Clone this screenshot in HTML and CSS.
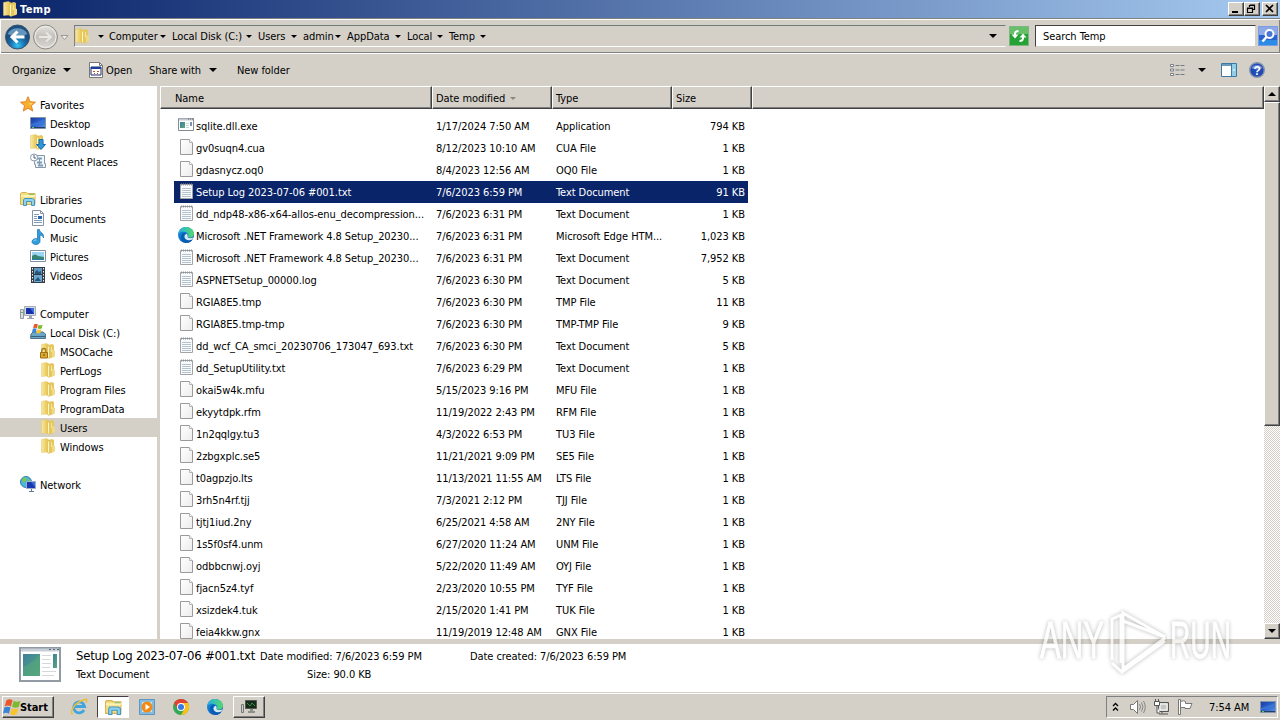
FILE: index.html
```
<!DOCTYPE html>
<html lang="en">
<head>
    <meta charset="UTF-8">
    <title>Temp</title>
    <link rel="stylesheet" href="styles.css">
</head>
<body>
    <!-- Shared icons -->
    <svg width="0" height="0" class="defs">
        <defs>
            <linearGradient id="gFolder"><stop offset="0" stop-color="#f9eaa0"/><stop offset="1" stop-color="#e2bb45"/></linearGradient>
            <linearGradient id="gBlue" x2="1" y2="1"><stop offset="0" stop-color="#173a9c"/><stop offset=".5" stop-color="#2c60cc"/><stop offset="1" stop-color="#5a9bea"/></linearGradient>
            <linearGradient id="gPage" x2="1" y2="1"><stop offset="0" stop-color="#fff"/><stop offset="1" stop-color="#ececec"/></linearGradient>
            <linearGradient id="gEdge" x2="1" y2="1"><stop offset="0" stop-color="#1b9de2"/><stop offset=".5" stop-color="#0c6fc8"/><stop offset="1" stop-color="#0b4f9e"/></linearGradient>
            <linearGradient id="gEdge2"><stop offset="0" stop-color="#25aee6"/><stop offset="1" stop-color="#55d96a"/></linearGradient>
            <linearGradient id="gTeal" x2="1" y2="1"><stop offset="0" stop-color="#3d7f9c"/><stop offset="1" stop-color="#57a97a"/></linearGradient>
            <radialGradient id="gBack" cy=".85"><stop offset="0" stop-color="#35c3f2"/><stop offset=".6" stop-color="#1871b0"/><stop offset="1" stop-color="#1c4f80"/></radialGradient>
            <linearGradient id="gFwd" x2="0" y2="1"><stop offset="0" stop-color="#e6e4e0"/><stop offset=".5" stop-color="#c2bfba"/><stop offset="1" stop-color="#dddad5"/></linearGradient>
        </defs>
        <symbol id="folder" viewBox="0 0 16 16">
            <path d="M7 2.500l5-1.500 2 1v12l-5 1.500z" fill="#e6c75f"/>
            <path d="M1.500 1.500l5-1 2.500 1.500v13.500l-2.500-1.500-5 .5z" fill="url(#gFolder)" stroke="#e3c565" stroke-width=".5"/>
            <path d="M8.500 3.500v11" stroke="#fff6c8"/><path d="M11.500 4v5" stroke="#f6e49c"/>
            <path d="M12 7l3 1v5.500l-3 .5z" fill="#f0da83"/>
        </symbol>
        <symbol id="file" viewBox="0 0 16 16">
            <path d="M2.500.5h9l3 3v12h-12z" fill="url(#gPage)" stroke="#9a9a9a"/>
            <path d="M11.500.5v3h3" fill="#fff" stroke="#b5b5b5"/>
        </symbol>
        <symbol id="text" viewBox="0 0 16 16">
            <path d="M2.500 1.500h12v14h-12z" fill="#f8fafb" stroke="#a0a4a8"/>
            <path d="M3 1.500h11.500" stroke="#8b9298" stroke-width="2" stroke-dasharray="1 1"/>
            <path d="M4 5.500h9M4 7.500h9M4 9.500h9M4 11.500h9M4 13.500h9" stroke="#b3c4cf"/>
        </symbol>
        <symbol id="app" viewBox="0 0 16 16">
            <path d="M.5 1.500h15v12h-15z" fill="#fff" stroke="#858b92"/>
            <path d="M1 2.500h14" stroke="#c3c9d0" stroke-width="2"/>
            <path d="M10 2h1M12 2h1M14 2h1" stroke="#59616b"/>
            <path d="M2 5h5v6h-5z" fill="url(#gTeal)"/>
            <path d="M8 6.500h3M8 8.500h3M8 10.500h3" stroke="#ccd3d8"/>
            <path d="M12 5h2v4h-2z" fill="#7892ad"/>
        </symbol>
        <symbol id="edge" viewBox="0 0 16 16">
            <circle cx="8" cy="8" r="8" fill="url(#gEdge)"/>
            <path d="M.3 6.500C1.500 2 4.500 0 8 0c4.500 0 8 3 8 6.800 0 2.400-1.800 3.900-4 3.900-1.700 0-2.600-.6-2.500-1.200.8-.8.9-1.600.5-2.500C9 4.500 3.500 3.500.3 6.500z" fill="url(#gEdge2)"/>
            <path d="M5.800 9.500c0-1.800 1-3 2.500-3.500-1.300-.7-4-.3-5 2.200-1 3 .7 6.600 4 7.500 3 .5 5.700-.8 7.200-3-3.700 2-8.700.8-8.700-3.200z" fill="#0a5cb2"/>
            <path d="M9.500 9.500c-.4.9 1.200 1.900 3.400 1.600 1.200-.1 1.900-.6 2.600-1.200-.3 1-.8 1.900-1.300 2.700-3.500 1.500-7.500.5-7.700-2.800 0-1.500.8-2.500 2.100-3 1 .5 1.300 1.600.9 2.700z" fill="#d8ebfa"/>
        </symbol>
        <symbol id="star" viewBox="0 0 16 16">
            <path d="M8 .7l2.100 5 5.400.5-4.100 3.500 1.300 5.300L8 12.200 3.300 15l1.300-5.300L.5 6.200l5.400-.5z" fill="#f9ae2d" stroke="#df8528"/>
            <path d="M8 3l1.200 3.800 3.500.4-2.700 2" fill="#ffdc75"/>
        </symbol>
        <symbol id="desktop" viewBox="0 0 16 16">
            <path d="M.5 2.500h15v11h-15z" fill="url(#gBlue)" stroke="#8294aa"/>
            <path d="M1 9l14-5v5L1 11z" fill="#3d77d8" opacity=".7"/>
            <path d="M1 12.500h14" stroke="#263d68"/><path d="M2 12.500h2" stroke="#63c65d"/>
        </symbol>
        <symbol id="downloads" viewBox="0 0 16 16">
            <use href="#folder" x="-1"/>
            <path d="M9 5.500h4v5h2.500L11 15.500l-4.500-5H9z" fill="#2e96da" stroke="#1769aa"/>
        </symbol>
        <symbol id="recent" viewBox="0 0 16 16">
            <path d="M5 2.500h9.500v8h1v4h-10v-3h-1z" fill="#f1f5f8" stroke="#8795a4"/>
            <path d="M7 5.500h5M7 9.500h5M8 12.500h5" stroke="#7e9cb8" stroke-width="2"/>
            <path d="M9.500 5v8" stroke="#7e9cb8"/>
            <circle cx="4" cy="4.500" r="3.500" fill="#fff" stroke="#8899a8"/><path d="M4 2v3h2" fill="none" stroke="#44617f"/>
        </symbol>
        <symbol id="library" viewBox="0 0 16 16">
            <path d="M.5 13.500v-11l1-1h5l1 1h7.500v11z" fill="#f4dc81" stroke="#d5b455"/>
            <path d="M1 5h14" stroke="#fff3b4" stroke-width="2"/><path d="M9 3.500h5" stroke="#7fc576"/>
            <path d="M3.500 14.500V9l1-1.500h8l2 1.500v5.500h-3v-4h-5v4z" fill="#8ed1ee" stroke="#4096c4"/>
        </symbol>
        <symbol id="document" viewBox="0 0 16 16">
            <path d="M2.500.5h8l3 3v12h-11z" fill="#fff" stroke="#8594a5"/><path d="M10.500.5v3h3" fill="none" stroke="#8594a5"/>
            <path d="M4 4.500h5M4 6.500h3M4 8.500h3M4 10.500h8M4 12.500h8" stroke="#7d9dbd"/>
            <path d="M8 6h4v3h-4z" fill="#2d67a5"/>
        </symbol>
        <symbol id="music" viewBox="0 0 16 16">
            <path d="M7.500.5h2c0 3 5 3.500 4 8.500-.5-2-2-3-3.500-3v6.500C9.500 17 1.500 16 2 12.500c.3-2.500 3.500-3.500 5.500-2.500z" fill="#2d9ddd" stroke="#2370a8" stroke-width=".7"/>
            <path d="M3.500 12q1-1.500 3-1" stroke="#a3def9" fill="none"/>
        </symbol>
        <symbol id="pictures" viewBox="0 0 16 16">
            <path d="M.5 2.500h15v11h-15z" fill="#fff" stroke="#8090a0"/>
            <path d="M2 4h12v8H2z" fill="#9bd5f4"/><path d="M2 8q3-3 6 0l6 1v3H2z" fill="#378472"/><path d="M2 11.500h12" stroke="#247cae"/>
        </symbol>
        <symbol id="videos" viewBox="0 0 16 16">
            <path d="M1 0h14v16H1z" fill="#343b44"/><path d="M4 1h8v6H4z" fill="#5d9bc2"/><path d="M4 8h8v7H4z" fill="#6ba9d0"/>
            <path d="M5 5l2-2 2 2 2-1v3H5zM5 13l3-3 3 4H5z" fill="#2a567b"/>
            <path d="M2.500 1v15M13.500 1v15" stroke="#eee" stroke-dasharray="1.500 1.500"/>
        </symbol>
        <symbol id="computer" viewBox="0 0 16 16">
            <path d="M.5 4.500h3v9h-3z" fill="#d9dce0" stroke="#929aa1"/><path d="M1 7.500h2" stroke="#5eb85b"/>
            <path d="M4.500 1.500h11v9h-11z" fill="#d4dce6" stroke="#a4acb5"/>
            <path d="M6 3h8v6H6z" fill="#182fac"/><path d="M10 3h4v6z" fill="#3c6dd9"/><path d="M9 11h3v2h2v1H7v-1h2z" fill="#9aa6b3"/>
        </symbol>
        <symbol id="disk" viewBox="0 0 16 16">
            <path d="M1 10l2-2h10l2.500 2v4.500H.5z" fill="#6aa6c8" stroke="#50738c"/><path d="M1 12.500h14" stroke="#3d617b"/>
            <use href="#flag" x="2" y="-1" width="11" height="11"/>
        </symbol>
        <symbol id="flag" viewBox="0 0 16 16">
            <path d="M3 2q3-2 5.500 0L7 7.500Q4.500 6 1.500 7.500z" fill="#e8572d"/>
            <path d="M9.500 2.500Q12 4 15.500 2.500L14 8q-3 1.500-6-.3z" fill="#7fb92c"/>
            <path d="M1.200 8.500q2.600-1.500 5.500 0L5.300 14Q3 12.500 0 13.800z" fill="#3a84d8"/>
            <path d="M7.700 9Q10.500 10.500 13.700 9l-1.500 5.500q-3 1.500-6-.3z" fill="#f8c32c"/>
        </symbol>
        <symbol id="lockfolder" viewBox="0 0 16 16">
            <use href="#folder"/>
            <path d="M1.800 9V7.500a2 2 0 0 1 4 0V9" fill="none" stroke="#a27b24" stroke-width="1.400"/><path d="M.5 9.500h7v5.500h-7z" fill="#dda82e" stroke="#9c7118"/><path d="M4 11v2" stroke="#624711"/>
        </symbol>
        <symbol id="network" viewBox="0 0 16 16">
            <circle cx="6" cy="6" r="5.500" fill="#48b7df" stroke="#387eac"/><path d="M2 3l3-2 2 2-2 3-2 1zM8 3l3 2-3 2z" fill="#7ac553"/>
            <path d="M6.500 5.500h9v7h-9z" fill="#1738b3" stroke="#9eb1c8"/><path d="M11 6h4v5z" fill="#3c6dd9"/><path d="M11.500 13v2M9 15.500h5" stroke="#627b96"/>
        </symbol>
    </svg>

    <div class="titlebar">
        <svg class="icon"><use href="#folder"/></svg>
        <span class="title">Temp</span>
        <div class="window-buttons">
            <button><svg width="12" height="10"><path d="M2 8h6" stroke="#000" stroke-width="2"/></svg></button>
            <button><svg width="12" height="10"><path d="M3.500 3V1.500h5v4H7M4 1h5M1.500 4.500h5v4h-5zM1 4h6" fill="none" stroke="#000" stroke-width="1.200"/></svg></button>
            <button class="close"><svg width="12" height="10"><path d="M2 1l7 7M9 1L2 8" stroke="#000" stroke-width="1.700"/></svg></button>
        </div>
    </div>

    <div class="navbar">
        <svg class="nav-buttons" width="69" height="30" viewBox="0 0 69 30">
            <circle cx="17.500" cy="16" r="12" fill="url(#gBack)" stroke="#38536e"/>
            <path d="M7.500 13a11 10 0 0 1 20 0q-10 5-20 0z" fill="#8dbbd9" opacity=".65"/>
            <path d="M24.500 16H12.500M17.500 10.500L12 16l5.500 5.500" fill="none" stroke="#fff" stroke-width="3"/>
            <circle cx="45.500" cy="16" r="12" fill="url(#gFwd)" stroke="#8d8b87"/>
            <circle cx="45.500" cy="16" r="10.500" fill="none" stroke="#efeeeb"/>
            <path d="M39 16h12M46 11.500l5 4.500-5 4.500" fill="none" stroke="#e8e6e3" stroke-width="2"/>
            <path d="M61 14.500h7l-3.500 4z" fill="#eee" stroke="#999"/>
        </svg>
        <div class="address">
            <svg class="icon"><use href="#folder"/></svg>
            <i class="arrow first"></i>
            <span class="crumb c1">Computer</span><i class="arrow"></i>
            <span class="crumb c2">Local Disk (C:)</span><i class="arrow"></i>
            <span class="crumb c3">Users</span><i class="arrow"></i>
            <span class="crumb c4">admin</span><i class="arrow"></i>
            <span class="crumb c5">AppData</span><i class="arrow"></i>
            <span class="crumb c6">Local</span><i class="arrow"></i>
            <span class="crumb c7">Temp</span><i class="arrow"></i>
            <i class="arrow big history"></i>
        </div>
        <svg class="refresh" width="20" height="20" viewBox="0 0 20 20">
            <path d="M.5.5h19v19H.5z" fill="#27a336" stroke="#7cb781"/><path d="M1 1h18v7H1z" fill="#67bf69"/>
            <path d="M9.500 5Q5.500 5 6 9" fill="none" stroke="#fff" stroke-width="2"/><path d="M2.500 8.500h7L6 12.500z" fill="#fff"/>
            <path d="M10.500 15q4 0 3.500-4" fill="none" stroke="#fff" stroke-width="2"/><path d="M10.500 11.500h7L14 7.500z" fill="#fff"/>
        </svg>
        <div class="search">Search Temp</div>
        <svg class="search-button" width="20" height="20" viewBox="0 0 20 20">
            <path d="M.5.5h19v19H.5z" fill="#2a62ce" stroke="#7c9de1"/><path d="M1 1h18v8H1z" fill="#8da8e5"/><path d="M1 14h18v5H1z" fill="#2c8be4"/>
            <circle cx="11.500" cy="8" r="4" fill="#4c76d3" stroke="#fff" stroke-width="2"/><path d="M8.500 11L4.500 15.500" stroke="#fff" stroke-width="2.500"/>
        </svg>
    </div>

    <div class="toolbar">
        <span class="organize">Organize</span><i class="arrow big"></i>
        <svg class="open-icon" width="16" height="16" viewBox="0 0 16 16">
            <path d="M1.500.5h10l3 3v12h-13z" fill="#fff" stroke="#777"/><path d="M11.500.5v3h3" fill="none" stroke="#777"/>
            <path d="M3 5h10v8H3z" fill="#fff" stroke="#1d2b70"/><path d="M3 6h10" stroke="#1d3b9a" stroke-width="2"/><path d="M5 9.500h2M9 9.500h2M6 11.500h1M9 11.500h1" stroke="#b53"/>
        </svg>
        <span class="open">Open</span>
        <span class="share">Share with</span><i class="arrow big"></i>
        <span class="new-folder">New folder</span>
        <svg class="view-icon" width="16" height="14" viewBox="0 0 16 14">
            <path d="M.5 1.500h3v2h-3zM.5 6h3v2h-3zM.5 10.500h3v2h-3z" fill="#fff" stroke="#777d85"/>
            <path d="M5.500 2.500h10M5.500 7h10M5.500 11.500h10" stroke="#727a83" stroke-dasharray="4 1"/>
        </svg>
        <i class="arrow big view-arrow"></i>
        <svg class="pane-icon" width="16" height="14" viewBox="0 0 16 14">
            <path d="M.5.5h15v13H.5z" fill="#fff" stroke="#3c79a5"/><path d="M1 2h9" stroke="#6b9bbb" stroke-width="2"/><path d="M10 1h5v12h-5z" fill="#91cfe9"/><path d="M10.500 1v12" stroke="#3c79a5"/><path d="M12 7h2" stroke="#fff"/>
        </svg>
        <svg class="help-icon" width="16" height="16" viewBox="0 0 16 16">
            <circle cx="8" cy="8" r="7.300" fill="#1f49b5" stroke="#8593ad" stroke-width="1.400"/><path d="M2.500 6a6 5 0 0 1 11 0q-5 3-11 0z" fill="#7190d7"/>
            <text x="4.600" y="12.500" class="help-mark">?</text>
        </svg>
    </div>

    <div class="main">
        <!-- Navigation tree -->
        <div class="tree">
            <div class="item"><svg class="icon"><use href="#star"/></svg>Favorites</div>
            <div class="item sub"><svg class="icon"><use href="#desktop"/></svg>Desktop</div>
            <div class="item sub"><svg class="icon"><use href="#downloads"/></svg>Downloads</div>
            <div class="item sub"><svg class="icon"><use href="#recent"/></svg>Recent Places</div>
            <div class="item group"><svg class="icon"><use href="#library"/></svg>Libraries</div>
            <div class="item sub"><svg class="icon"><use href="#document"/></svg>Documents</div>
            <div class="item sub"><svg class="icon"><use href="#music"/></svg>Music</div>
            <div class="item sub"><svg class="icon"><use href="#pictures"/></svg>Pictures</div>
            <div class="item sub"><svg class="icon"><use href="#videos"/></svg>Videos</div>
            <div class="item group"><svg class="icon"><use href="#computer"/></svg>Computer</div>
            <div class="item sub"><svg class="icon"><use href="#disk"/></svg>Local Disk (C:)</div>
            <div class="item sub2"><svg class="icon"><use href="#lockfolder"/></svg>MSOCache</div>
            <div class="item sub2"><svg class="icon"><use href="#folder"/></svg>PerfLogs</div>
            <div class="item sub2"><svg class="icon"><use href="#folder"/></svg>Program Files</div>
            <div class="item sub2"><svg class="icon"><use href="#folder"/></svg>ProgramData</div>
            <div class="item sub2 current"><svg class="icon"><use href="#folder"/></svg>Users</div>
            <div class="item sub2"><svg class="icon"><use href="#folder"/></svg>Windows</div>
            <div class="item group"><svg class="icon"><use href="#network"/></svg>Network</div>
        </div>

        <!-- File list -->
        <div class="list">
            <div class="header">
                <div class="col name">Name</div>
                <div class="col">Date modified<i class="arrow sort"></i></div>
                <div class="col">Type</div>
                <div class="col">Size</div>
                <div class="col"></div>
            </div>
            <div class="rows" id="rows"></div>
        </div>

        <div class="scrollbar">
            <div class="sb-button"><i class="arrow big up"></i></div>
            <div class="thumb"></div>
            <div class="track"></div>
            <div class="sb-button"><i class="arrow big"></i></div>
        </div>
    </div>

    <div class="details">
        <svg class="preview" width="42" height="36" viewBox="0 0 42 36">
            <path d="M1 1h40v33H1z" fill="#fff" stroke="#929ba5" stroke-width="2"/>
            <path d="M2 3h38" stroke="#c7cfd8" stroke-width="3"/><path d="M30 2.500h2M34 2.500h2M38 2.500h2" stroke="#5b6873"/>
            <path d="M4 7h17v22H4z" fill="url(#gTeal)"/><path d="M4 20Q14 16 21 7v22H4z" fill="#55a67c" opacity=".6"/>
            <path d="M23 8.500h9M23 12.500h8M23 16.500h9M23 20.500h8M23 24.500h14M23 28.500h12" stroke="#d5d8da"/>
            <path d="M34 7h4v14h-4z" fill="url(#gTeal)"/>
        </svg>
        <div class="info">
            <div class="line"><span class="filename">Setup Log 2023-07-06 #001.txt</span><span class="modified">Date modified: 7/6/2023 6:59 PM</span><span>Date created: 7/6/2023 6:59 PM</span></div>
            <div class="line second"><span class="kind">Text Document</span><span class="size">Size: 90.0 KB</span></div>
        </div>
    </div>

    <div class="taskbar">
        <div class="start"><svg width="18" height="18"><use href="#flag"/></svg>Start</div>
        <div class="task">
            <svg width="18" height="18" viewBox="0 0 18 18">
                <path d="M14 12a5.500 5.500 0 1 1 .6-3.500H5" fill="none" stroke="#3fa5df" stroke-width="2.800"/>
                <path d="M3 16Q0 16 3 10T15 1.500Q18 .5 16 5" fill="none" stroke="#edbd36" stroke-width="1.500"/>
            </svg>
        </div>
        <div class="task pressed"><svg width="17" height="17"><use href="#library"/></svg></div>
        <div class="task">
            <svg width="16" height="16" viewBox="0 0 16 16">
                <path d="M.5.500h15v15H.5z" fill="#84bce3" stroke="#5c97c2"/><path d="M3 3h10v10H3z" fill="#c8e4f4"/><circle cx="8" cy="8" r="5.500" fill="#f28a16"/><path d="M6.500 5l4.500 3-4.500 3z" fill="#fff"/>
            </svg>
        </div>
        <div class="task">
            <svg width="16" height="16" viewBox="0 0 16 16">
                <circle cx="8" cy="8" r="8" fill="#35a853"/><path d="M1.100 4A8 8 0 0 1 15 4H8L4.500 10z" fill="#e34133"/><path d="M15 4a8 8 0 0 1-7 12l3.500-6V6L8 4z" fill="#fbc116"/>
                <circle cx="8" cy="8" r="4" fill="#fff"/><circle cx="8" cy="8" r="3" fill="#3879e8"/>
            </svg>
        </div>
        <div class="task"><svg width="16" height="16"><use href="#edge"/></svg></div>
        <div class="task raised">
            <svg width="16" height="16" viewBox="0 0 16 16">
                <path d="M4.500 1.500h11v8h-11z" fill="#172a1c" stroke="#50584f"/><path d="M6 4l3 3 2-3 3 3" fill="none" stroke="#388d43"/>
                <path d="M.5 5.500h2v8h-2z" fill="#ccc" stroke="#777"/><path d="M9 10h3v2h2v2H7v-2h2z" fill="#8d918b"/>
            </svg>
        </div>
        <div class="tray">
            <svg width="7" height="10" viewBox="0 0 7 10"><path d="M1 4l2.500-2.500L6 4M1 8.500L3.500 6 6 8.500" fill="none" stroke="#000" stroke-width="1.300"/></svg>
            <svg class="speaker" width="17" height="16" viewBox="0 0 17 16"><path d="M1.500 5.500h3l4-4v13l-4-4h-3z" fill="#fff" stroke="#777"/><path d="M10.500 5q2 3 0 6M12.500 3.500q3 4.500 0 9M14.500 2q3.500 6 0 12" fill="none" stroke="#888"/></svg>
            <svg class="net" width="17" height="16" viewBox="0 0 17 16"><path d="M5.500 3.500h10v9h-10z" fill="#c5c5c1" stroke="#555"/><path d="M7 5h7v6H7z" fill="none" stroke="#fff"/><path d="M9 13v1.500M6 15h9" stroke="#555"/><path d="M1.500 2.500h5v4h-5zM2.500 0v3M5.500 0v3M4 6.500V14h3" fill="#fff" stroke="#555"/></svg>
            <svg class="flag" width="16" height="16" viewBox="0 0 16 16"><path d="M1.500.5h2v15h-2z" fill="#fff" stroke="#777"/><path d="M3.500 2.500q3-1.500 5 0v2h6.500l-2 5h-5v-1h-4.500z" fill="#fff" stroke="#777"/></svg>
            <span class="clock">7:54 AM</span>
            <svg class="show-desktop" width="16" height="16"><use href="#desktop"/></svg>
        </div>
    </div>

    <svg class="watermark" width="214" height="80" viewBox="0 0 214 80">
        <g class="mark">
            <text x="5" y="54" textLength="64" lengthAdjust="spacingAndGlyphs">ANY</text>
            <text x="135" y="54" textLength="61" lengthAdjust="spacingAndGlyphs">RUN</text>
            <path d="M77 56V15l9-4v48 M88 9l42 24-42-16z M88 8v57l42-31 M77 59l10 9 43-31" />
        </g>
    </svg>

    <script>
        const files = [
            ['app', 'sqlite.dll.exe', '1/17/2024 7:50 AM', 'Application', '794 KB'],
            ['file', 'gv0suqn4.cua', '8/12/2023 10:10 AM', 'CUA File', '1 KB'],
            ['file', 'gdasnycz.oq0', '8/4/2023 12:56 AM', 'OQ0 File', '1 KB'],
            ['text', 'Setup Log 2023-07-06 #001.txt', '7/6/2023 6:59 PM', 'Text Document', '91 KB'],
            ['text', 'dd_ndp48-x86-x64-allos-enu_decompression...', '7/6/2023 6:31 PM', 'Text Document', '1 KB'],
            ['edge', 'Microsoft .NET Framework 4.8 Setup_20230...', '7/6/2023 6:31 PM', 'Microsoft Edge HTM...', '1,023 KB'],
            ['text', 'Microsoft .NET Framework 4.8 Setup_20230...', '7/6/2023 6:31 PM', 'Text Document', '7,952 KB'],
            ['text', 'ASPNETSetup_00000.log', '7/6/2023 6:30 PM', 'Text Document', '5 KB'],
            ['file', 'RGIA8E5.tmp', '7/6/2023 6:30 PM', 'TMP File', '11 KB'],
            ['file', 'RGIA8E5.tmp-tmp', '7/6/2023 6:30 PM', 'TMP-TMP File', '9 KB'],
            ['text', 'dd_wcf_CA_smci_20230706_173047_693.txt', '7/6/2023 6:30 PM', 'Text Document', '5 KB'],
            ['text', 'dd_SetupUtility.txt', '7/6/2023 6:29 PM', 'Text Document', '1 KB'],
            ['file', 'okai5w4k.mfu', '5/15/2023 9:16 PM', 'MFU File', '1 KB'],
            ['file', 'ekyytdpk.rfm', '11/19/2022 2:43 PM', 'RFM File', '1 KB'],
            ['file', '1n2qqlgy.tu3', '4/3/2022 6:53 PM', 'TU3 File', '1 KB'],
            ['file', '2zbgxplc.se5', '11/21/2021 9:09 PM', 'SE5 File', '1 KB'],
            ['file', 't0agpzjo.lts', '11/13/2021 11:55 AM', 'LTS File', '1 KB'],
            ['file', '3rh5n4rf.tjj', '7/3/2021 2:12 PM', 'TJJ File', '1 KB'],
            ['file', 'tjtj1iud.2ny', '6/25/2021 4:58 AM', '2NY File', '1 KB'],
            ['file', '1s5f0sf4.unm', '6/27/2020 11:24 AM', 'UNM File', '1 KB'],
            ['file', 'odbbcnwj.oyj', '5/22/2020 11:49 AM', 'OYJ File', '1 KB'],
            ['file', 'fjacn5z4.tyf', '2/23/2020 10:55 PM', 'TYF File', '1 KB'],
            ['file', 'xsizdek4.tuk', '2/15/2020 1:41 PM', 'TUK File', '1 KB'],
            ['file', 'feia4kkw.gnx', '11/19/2019 12:48 AM', 'GNX File', '1 KB']
        ];

        document.getElementById('rows').innerHTML = files.map(([icon, name, date, type, size], i) => `
            <div class="row${i === 3 ? ' selected' : ''}">
                <svg class="icon"><use href="#${icon}"/></svg>
                <span>${name}</span><span>${date}</span><span>${type}</span><span class="size">${size}</span>
            </div>`).join('');
    </script>
</body>
</html>
```
FILE: styles.css
```
* {
    box-sizing: border-box;
}

body {
    margin: 0;
    width: 1280px;
    height: 720px;
    overflow: hidden;
    display: flex;
    flex-direction: column;
    background: #d4d0c8;
    color: #000;
    font-family: "DejaVu Sans Condensed", "DejaVu Sans", sans-serif;
    font-stretch: condensed;
    font-size: 11px;
    letter-spacing: -0.07px;
    white-space: nowrap;
}

svg {
    flex: none;
    display: block;
}

.defs {
    position: absolute;
}

.icon {
    width: 16px;
    height: 16px;
}

/* Small dropdown triangles */
.arrow {
    flex: none;
    width: 0;
    height: 0;
    border: 3px solid transparent;
    border-top-color: #000;
    border-bottom: 0;
}

.arrow.big {
    border-width: 4px 4px 0;
}

.arrow.up {
    transform: rotate(180deg);
}

.arrow.sort {
    border-top-color: #8a8780;
    margin-left: 5px;
}

/* Title bar */
.titlebar {
    flex: none;
    height: 18px;
    display: flex;
    align-items: center;
    padding: 0 2px;
    background: linear-gradient(to right, #0a246a, #a6caf0);
    color: #fff;
}

.title {
    margin-left: 2px;
    font-weight: bold;
    letter-spacing: 0.4px;
    flex: 1;
}

.window-buttons {
    display: flex;
}

.window-buttons button {
    width: 16px;
    height: 14px;
    padding: 0 0 0 1px;
    background: #d4d0c8;
    border: 1px solid;
    border-color: #fff #404040 #404040 #fff;
    box-shadow: inset -1px -1px #808080;
}

.window-buttons .close {
    margin-left: 2px;
}

/* Address bar */
.navbar {
    flex: none;
    height: 36px;
    display: flex;
    align-items: center;
    border-top: 1px solid #808080;
    border-bottom: 1px solid #fff;
    box-shadow: inset 0 1px #fff, inset 1px 0 #fff, inset 0 -1px #808080, inset -1px 0 #808080;
    padding-right: 2px;
}

.nav-buttons {
    margin-right: 5px;
}

.address {
    width: 932px;
    height: 22px;
    display: flex;
    align-items: center;
    border: 1px solid;
    border-color: #6e7d7b #d4d0c8 #fff #808080;
}

.address .icon {
    margin-left: -1px;
}

.first {
    margin: 0 5px 0 8px;
}

.crumb {
    flex: none;
    margin-right: 3px;
}

.crumb + .arrow {
    margin-right: 6px;
}

.c1 { width: 48px; }
.c2 { width: 71px; }
.c3 { width: 30px; }
.c4 { width: 29px; }
.c5 { width: 45px; }
.c6 { width: 27px; }
.c7 { width: 28px; }

.history {
    margin-left: auto;
    margin-right: 8px;
}

.refresh {
    margin: 0 6px 0 3px;
}

.search {
    flex: 1;
    height: 22px;
    line-height: 21px;
    padding-left: 7px;
    margin-right: 2px;
    background: #fff;
    border: 1px solid;
    border-color: #404040 #d4d0c8 #d4d0c8 #404040;
}

/* Toolbar */
.toolbar {
    flex: none;
    height: 32px;
    display: flex;
    align-items: center;
    padding: 0 15px 0 12px;
}

.organize {
    width: 51px;
}

.open-icon {
    margin: 0 2px 0 17px;
}

.open {
    width: 43px;
}

.share {
    width: 60px;
}

.new-folder {
    margin-left: 20px;
    flex: 1;
}

.view-arrow {
    margin: 0 15px 0 12px;
}

.pane-icon {
    margin-right: 12px;
}

.help-mark {
    font: bold 12px "Liberation Sans", sans-serif;
    fill: #fff;
}

/* Main area */
.main {
    flex: none;
    height: 553px;
    display: flex;
}

.tree {
    width: 157px;
    padding-top: 9px;
    background: #fff;
}

.item {
    height: 19px;
    display: flex;
    align-items: center;
    padding: 1px 0 0 20px;
}

.item .icon {
    margin-right: 4px;
    margin-top: -3px;
}

.sub {
    padding-left: 30px;
}

.sub2 {
    padding-left: 40px;
}

.group {
    margin-top: 19px;
}

.current {
    background: #d4d0c8;
}

.list {
    flex: 1;
    margin-left: 3px;
    background: #fff;
    overflow: hidden;
}

.header {
    height: 23px;
    display: grid;
    grid-template-columns: 272px 120px 120px 80px 1fr;
    background: #d4d0c8;
}

.col {
    display: flex;
    align-items: center;
    padding: 1px 0 0 3px;
    border: 1px solid;
    border-color: #fff #404040 #404040 #fff;
    box-shadow: inset -1px -1px #808080;
}

.col.name {
    padding-left: 14px;
}

.rows {
    padding: 6px 0 0 14px;
}

.row {
    width: 574px;
    height: 22px;
    display: grid;
    grid-template-columns: 22px 240px 120px 120px 69px;
    align-items: center;
}

.row .icon {
    margin: -2px 0 0 4px;
}

.row .size {
    text-align: right;
}

.selected {
    background: #0a246a;
    color: #fff;
}

/* Scrollbar */
.scrollbar {
    width: 16px;
    display: flex;
    flex-direction: column;
}

.sb-button,
.thumb {
    flex: none;
    height: 16px;
    display: flex;
    align-items: center;
    justify-content: center;
    background: #d4d0c8;
    border: 1px solid;
    border-color: #fff #404040 #404040 #fff;
    box-shadow: inset -1px -1px #808080;
}

.thumb {
    height: 324px;
}

.track {
    flex: 1;
    background: repeating-conic-gradient(#fff 0 25%, #d4d0c8 0 50%) 0 0 / 2px 2px;
}

/* Details pane */
.details {
    flex: none;
    height: 53px;
    display: flex;
    background: #fff;
    border-top: 5px solid #d4d0c8;
    padding-left: 19px;
}

.preview {
    margin-top: 3px;
}

.info {
    margin-left: 15px;
}

.line {
    height: 24px;
    line-height: 25px;
    display: flex;
}

.second {
    height: 14px;
    line-height: 13px;
}

.filename {
    width: 184px;
    font-size: 13px;
    line-height: 24px;
    letter-spacing: -0.24px;
}

.modified {
    width: 210px;
}

.kind {
    width: 231px;
}

/* Taskbar */
.taskbar {
    flex: 1;
    display: flex;
    align-items: center;
    border-top: 1px solid #d4d0c8;
    box-shadow: inset 0 1px #fff;
    padding: 1px 2px 0;
}

.start {
    width: 52px;
    height: 22px;
    display: flex;
    align-items: center;
    margin-right: 9px;
    font-weight: bold;
    border: 1px solid;
    border-color: #fff #404040 #404040 #fff;
    box-shadow: inset -1px -1px #808080;
}

.start svg {
    margin-right: -1px;
}

.task {
    width: 32px;
    height: 22px;
    display: flex;
    align-items: center;
    justify-content: center;
    border: 1px solid transparent;
    margin-right: 2px;
}

.pressed {
    background: #fff;
    border-color: #404040 #fff #fff #404040;
}

.raised {
    border-color: #fff #404040 #404040 #fff;
    box-shadow: inset -1px -1px #808080;
}

.tray {
    width: 172px;
    height: 22px;
    display: flex;
    align-items: center;
    margin-left: auto;
    padding-left: 5px;
    border: 1px solid;
    border-color: #808080 #fff #fff #808080;
}

.speaker {
    margin-left: 10px;
}

.net {
    margin-left: 7px;
}

.flag {
    margin-left: 7px;
}

.clock {
    width: 51px;
    margin-left: 16px;
}

/* Watermark over the window */
.watermark {
    position: absolute;
    left: 1035px;
    top: 604px;
}

.mark {
    filter: drop-shadow(0 0 2px rgba(0, 0, 0, 0.4));
    opacity: 0.7;
}

.mark text {
    font: 51px "Liberation Sans", sans-serif;
    letter-spacing: 0;
    fill: #fff;
    stroke: #fff;
    stroke-width: 0.8;
}

.mark path {
    fill: none;
    stroke: #fff;
    stroke-width: 3;
}
```
